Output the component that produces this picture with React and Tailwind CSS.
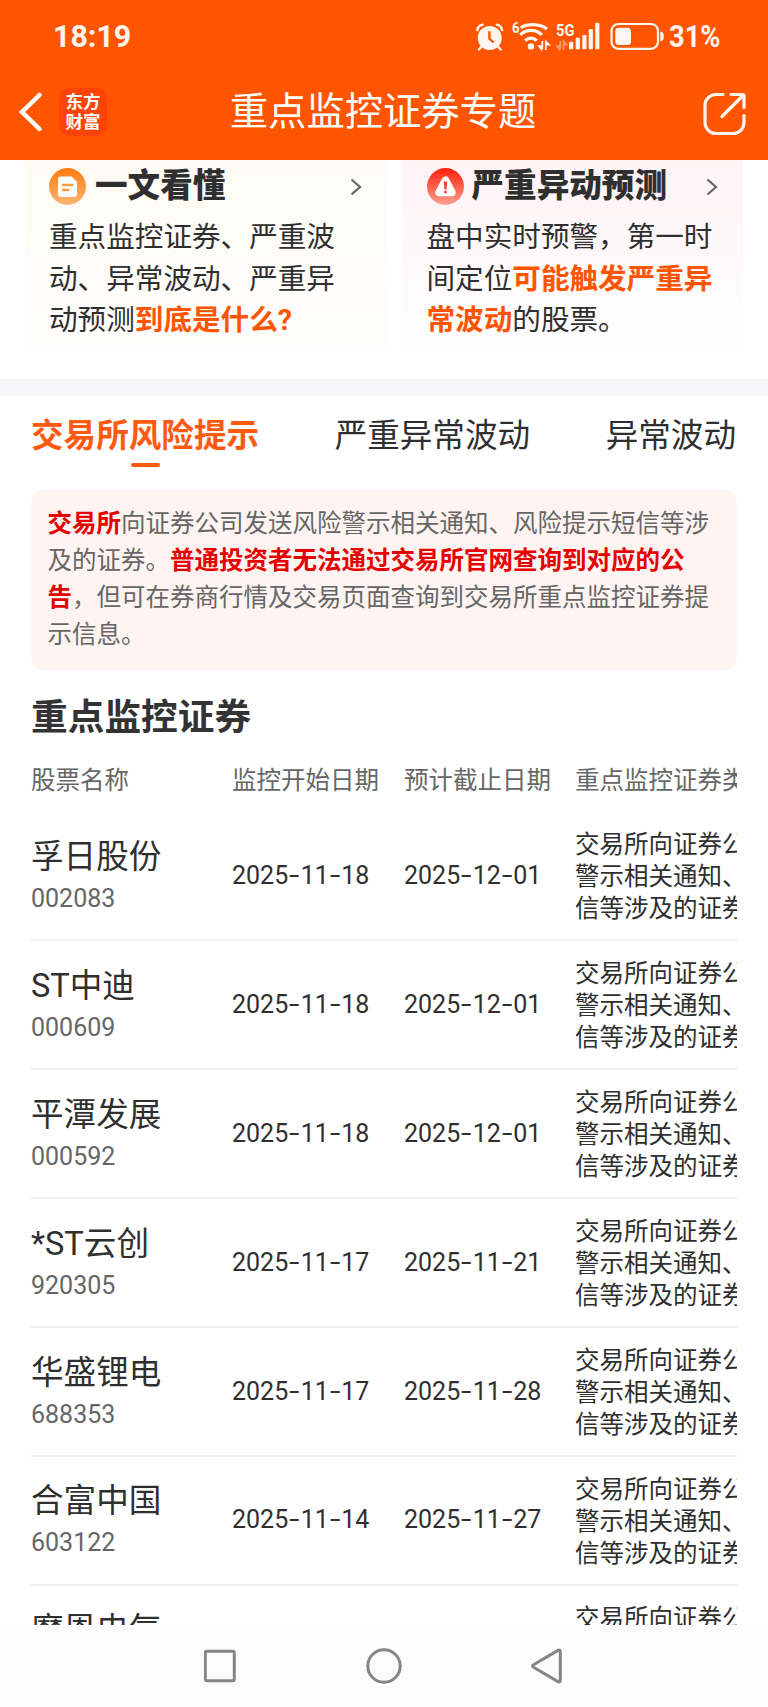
import React from "react";

const rows = [
  { name: "孚日股份", code: "002083", start: "2025-11-18", end: "2025-12-01" },
  { name: "ST中迪", code: "000609", start: "2025-11-18", end: "2025-12-01" },
  { name: "平潭发展", code: "000592", start: "2025-11-18", end: "2025-12-01" },
  { name: "*ST云创", code: "920305", start: "2025-11-17", end: "2025-11-21" },
  { name: "华盛锂电", code: "688353", start: "2025-11-17", end: "2025-11-28" },
  { name: "合富中国", code: "603122", start: "2025-11-14", end: "2025-11-27" },
  { name: "摩恩电气", code: "", start: "", end: "" },
];

function StatusIcons() {
  return (
    <svg className="block shrink-0" width="192" height="34" viewBox="474 20 192 34" fill="none">
      {/* alarm clock */}
      <circle cx="489.700" cy="38" r="12" fill="#fff6f0" />
      <path d="M477.200 30.200c.6-2.800 2.500-4.800 5.400-5.500M502.200 30.200c-.6-2.800-2.500-4.800-5.400-5.500M481.500 46.500l-2.600 3M498 46.500l2.600 3" stroke="#fff6f0" strokeWidth="2.400" strokeLinecap="round" />
      <path d="M489.400 31.300v7.200l4.100 4" stroke="#ff5500" strokeWidth="2.400" />
      {/* wifi */}
      <text x="512" y="33.300" fontSize="14.500" fontWeight="700" fill="#fff6f0" fontFamily="Roboto, sans-serif" textLength="7.500" lengthAdjust="spacingAndGlyphs">6</text>
      <circle cx="531" cy="46.400" r="3.200" fill="#fff6f0" />
      <path d="M520.500 27.600c7.500-4.200 18.500-4.200 26.500 1.300M520.300 34.800c6-6 15.400-6 21.600 0M525.200 40.700c3.600-3.400 8-3.400 11.600 0" stroke="#fff6f0" strokeWidth="3.200" />
      <path d="M542.300 41v8M539.200 46.200h2l0 2.800zM545.800 50v-8.500l3.200 3.200h-3.200" stroke="#fff6f0" strokeWidth="1.800" />
      {/* cellular */}
      <text x="556" y="36" fontSize="17" fontWeight="700" fill="#fff6f0" fontFamily="Roboto, sans-serif" textLength="18.500" lengthAdjust="spacingAndGlyphs">5G</text>
      <path d="M560.300 41v8.500M557 46.200h2l0 2.800zM563.500 50v-8.500l3 3.200h-3" stroke="#ff9a68" strokeWidth="1.700" />
      <g fill="#fff6f0">
        <rect x="569" y="41.700" width="4.200" height="7.600" rx="1" />
        <rect x="575.700" y="37.700" width="4.200" height="11.600" rx="1" />
        <rect x="582.300" y="35" width="4.200" height="14.300" rx="1" />
        <rect x="588.700" y="29" width="4.200" height="20.300" rx="1" />
        <rect x="595.200" y="22.700" width="4.200" height="26.600" rx="1" />
      </g>
      {/* battery */}
      <rect x="611.500" y="24" width="46.500" height="24.800" rx="7" stroke="#fff6f0" strokeWidth="2.200" />
      <rect x="615.300" y="27.700" width="15.700" height="17.200" rx="3.500" fill="#fff6f0" />
      <path d="M660.300 31.500c2.600.4 3.400 1.600 3.400 4.900s-.8 4.500-3.400 4.900z" fill="#fff6f0" />
    </svg>
  );
}

function Chevron() {
  return (
    <svg className="block" width="14" height="20" viewBox="0 0 14 20" fill="none">
      <path d="M2.500 2.500 11 10l-8.500 7.500" stroke="#666" strokeWidth="2.200" />
    </svg>
  );
}

function ArticleIcon() {
  return (
    <svg className="block shrink-0" width="37" height="37" viewBox="0 0 37 37">
      <defs>
        <linearGradient id="article" x1="0" y1="0" x2="0" y2="1">
          <stop offset="0" stopColor="#ff7b0d" />
          <stop offset="1" stopColor="#ffb673" />
        </linearGradient>
      </defs>
      <circle cx="18.500" cy="18.500" r="18.500" fill="url(#article)" />
      <path d="M12 8.500h10.500l5.500 5.200V26a3 3 0 0 1-3 3H12a3 3 0 0 1-3-3V11.500a3 3 0 0 1 3-3z" fill="#fff" />
      <path d="M14 17h9.500M14 22h5.500" stroke="#ff9b42" strokeWidth="2.300" strokeLinecap="round" />
    </svg>
  );
}

function AlertIcon() {
  return (
    <svg className="block shrink-0" width="37" height="37" viewBox="0 0 37 37">
      <defs>
        <linearGradient id="alert" x1="0" y1="0" x2="0" y2="1">
          <stop offset="0" stopColor="#ff1f0a" />
          <stop offset="1" stopColor="#ffa090" />
        </linearGradient>
      </defs>
      <circle cx="18.500" cy="18.500" r="18.500" fill="url(#alert)" />
      <path d="M18.500 12.500 12.300 24.300h12.400z" fill="#fff" stroke="#fff" strokeWidth="8" strokeLinejoin="round" />
      <path d="M16.700 13.500h3.600l-.8 8h-2z" fill="#ff3d2a" />
      <circle cx="18.500" cy="24" r="1.600" fill="#ff4a38" />
    </svg>
  );
}

function DateText({ value }) {
  return (
    <div className="flex h-[32px] items-center text-[25px] leading-[32px] text-[#2f2f2f]">
      {value.split("-").map((part, i) => (
        <React.Fragment key={i}>
          {i > 0 && <span className="inline-block w-[12.500px] scale-x-150 text-center">-</span>}
          <span>{part}</span>
        </React.Fragment>
      ))}
    </div>
  );
}

const grid = "grid grid-cols-[201px_172px_171px_162px]";

export default function App() {
  return (
    <div
      lang="zh-CN"
      className="flex h-[1707px] w-[768px] flex-col overflow-hidden bg-white font-[Roboto,'Noto_Sans_CJK_SC',sans-serif] text-[#2f2f2f]"
    >
      <header className="h-[160px] shrink-0 bg-[#ff5500] text-white">
        <div className="flex h-[74px] items-center pl-[53px] pr-[47px] text-[#fff6f0]">
          <div className="flex-1 text-[31px] font-bold leading-[36px]">
            <span className="inline-block origin-left scale-x-[0.98]">18:19</span>
          </div>
          <StatusIcons />
          <div className="w-[55px] whitespace-nowrap pl-[3px] text-[31px] font-bold leading-[36px]">
            <span className="inline-block origin-left scale-x-[0.88]">31%</span>
          </div>
        </div>
        <div className="flex h-[76px] items-center pl-[18px] pr-[20px]">
          <div className="flex w-[190px] items-center gap-[15px]">
            <svg className="block" width="26" height="42" viewBox="0 0 26 42" fill="none">
              <path d="M21.500 4 4 21 21.500 38" stroke="#fff" strokeWidth="4.500" strokeLinecap="round" />
            </svg>
            <div className="flex h-[48px] w-[48px] flex-col items-center justify-center rounded-[10px] bg-[#ff4407] text-[17.500px] font-bold leading-[20.500px]">
              <span>东方</span>
              <span>财富</span>
            </div>
          </div>
          <h1 className="flex-1 text-center text-[38.300px] leading-[48px]">重点监控证券专题</h1>
          <div className="flex w-[190px] justify-end pt-[4px]">
            <svg className="block" width="46" height="46" viewBox="0.500 0 46 46" fill="none" stroke="#fff6f0" strokeWidth="3.200" strokeLinecap="round">
              <path d="M21.500 3.500h-7A11 11 0 0 0 3.500 14.500v17A11 11 0 0 0 14.500 42.500h17A11 11 0 0 0 42.500 31.500v-7" />
              <path d="M29.500 3.500h11.500a1.500 1.500 0 0 1 1.500 1.500v11.500M41.500 4.500 20.500 25.500" />
            </svg>
          </div>
        </div>
      </header>

      <section className="flex h-[219px] shrink-0 gap-[15px] pl-[25px] pr-[25px]">
        <div className="h-[190px] w-[362px] bg-linear-to-b from-[#fffbf4] to-[#fffefd] pl-[24px] pr-[24px] pt-[8px]">
          <div className="flex h-[37px] items-center">
            <ArticleIcon />
            <h2 className="ml-[9px] flex-1 text-[32.600px] font-black leading-[37px]">一文看懂</h2>
            <Chevron />
          </div>
          <p className="mt-[12px] whitespace-nowrap text-[28.600px] leading-[41.500px]">
            重点监控证券、严重波
            <br />
            动、异常波动、严重异
            <br />
            动预测<b className="text-[#ff5500]">到底是什么?</b>
          </p>
        </div>
        <div className="h-[190px] w-[341px] bg-linear-to-b from-[#fff3f6] to-[#fffefe] pl-[24.500px] pr-[24px] pt-[8px]">
          <div className="flex h-[37px] items-center">
            <AlertIcon />
            <h2 className="ml-[8px] flex-1 whitespace-nowrap text-[32.600px] font-black leading-[37px]">严重异动预测</h2>
            <Chevron />
          </div>
          <p className="mt-[12px] whitespace-nowrap text-[28.600px] leading-[41.500px]">
            盘中实时预警，第一时
            <br />
            间定位<b className="text-[#ff5500]">可能触发严重异</b>
            <br />
            <b className="text-[#ff5500]">常波动</b>的股票。
          </p>
        </div>
      </section>

      <div className="h-[17px] shrink-0 bg-[#f7f7fa]" />

      <nav className="flex h-[94px] shrink-0 justify-between pl-[31px] pr-[32px] pt-[18px] text-[32.600px] leading-[44px]">
        <div className="flex flex-col items-center font-bold text-[#ff5a10]">
          <span>交易所风险提示</span>
          <span className="mt-[5px] h-[4px] w-[29px] rounded-full bg-[#ff5a10]" />
        </div>
        <span>严重异常波动</span>
        <span>异常波动</span>
      </nav>

      <main className="flex min-h-0 flex-1 flex-col overflow-hidden pl-[31px] pr-[31px]">
        <p className="h-[180px] shrink-0 whitespace-nowrap rounded-[12px] bg-[#fff4f2] pl-[16.500px] pt-[15px] text-[24.500px] leading-[37px] text-[#666]">
          <b className="text-[#e60000]">交易所</b>向证券公司发送风险警示相关通知、风险提示短信等涉
          <br />
          及的证券。<b className="text-[#e60000]">普通投资者无法通过交易所官网查询到对应的公</b>
          <br />
          <b className="text-[#e60000]">告</b>，但可在券商行情及交易页面查询到交易所重点监控证券提
          <br />
          示信息。
        </p>

        <h2 className="mt-[24px] text-[36.700px] font-bold leading-[48px] text-[#333]">重点监控证券</h2>

        <div className={`${grid} mt-[21px] h-[49.500px] shrink-0 whitespace-nowrap text-[24.500px] leading-[36px] text-[#666]`}>
          <span>股票名称</span>
          <span>监控开始日期</span>
          <span>预计截止日期</span>
          <span className="overflow-hidden">重点监控证券类型</span>
        </div>

        {rows.map((r) => (
          <div key={r.name} className={`${grid} h-[128.900px] shrink-0 items-center border-b-2 border-[#efefef]`}>
            <div className="flex flex-col pt-[2px]">
              <span className="text-[32.600px] leading-[44px]">{r.name}</span>
              <span className="h-[40px] text-[25px] leading-[39px] text-[#666]">{r.code}</span>
            </div>
            <DateText value={r.start} />
            <DateText value={r.end} />
            <div className="overflow-hidden whitespace-nowrap pt-[3px] text-[24.500px] leading-[32px]">
              交易所向证券公司发送风险
              <br />
              警示相关通知、风险提示短
              <br />
              信等涉及的证券。
            </div>
          </div>
        ))}
      </main>

      <footer className="flex h-[82px] shrink-0 items-center justify-center bg-[#fcfcfc]">
        <svg className="block" width="360" height="40" viewBox="204 1645.500 360 40" fill="none" stroke="#858585" strokeWidth="3">
          <rect x="205.300" y="1650.700" width="29" height="29.500" rx="1.500" />
          <circle cx="384" cy="1665.500" r="16.200" />
          <path d="M533.500 1664.300 557.600 1650.100Q560.300 1648.500 560.300 1651.600V1679.400Q560.300 1682.500 557.600 1680.900L533.500 1666.700Q531.500 1665.500 533.500 1664.300Z" />
        </svg>
      </footer>
    </div>
  );
}
